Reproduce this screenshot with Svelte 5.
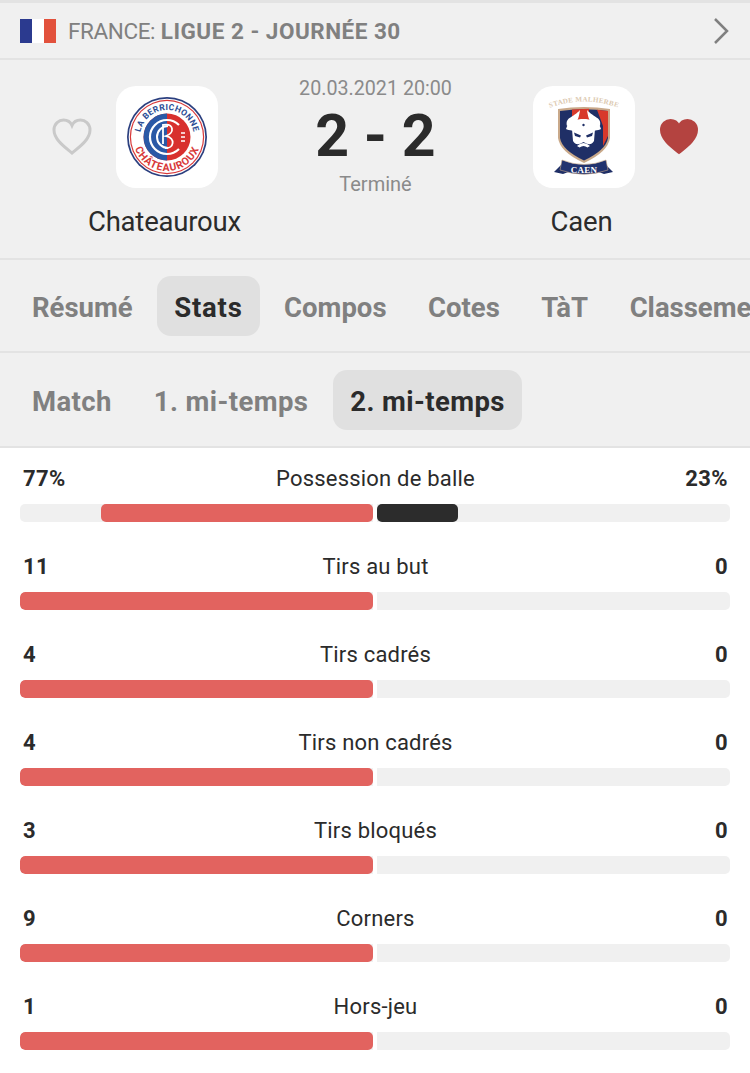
<script>
  const tabs = ['Résumé', 'Stats', 'Compos', 'Cotes', 'TàT', 'Classement'];
  const subtabs = ['Match', '1. mi-temps', '2. mi-temps'];
  const stats = [
    { name: 'Possession de balle', home: '77%', away: '23%', h: 77, a: 23 },
    { name: 'Tirs au but', home: '11', away: '0', h: 100, a: 0 },
    { name: 'Tirs cadrés', home: '4', away: '0', h: 100, a: 0 },
    { name: 'Tirs non cadrés', home: '4', away: '0', h: 100, a: 0 },
    { name: 'Tirs bloqués', home: '3', away: '0', h: 100, a: 0 },
    { name: 'Corners', home: '9', away: '0', h: 100, a: 0 },
    { name: 'Hors-jeu', home: '1', away: '0', h: 100, a: 0 }
  ];
  const heart = 'M20 35 C14 30 2 22 2 12 C2 5.500 7 2 11.500 2 C15 2 18.500 4 20 7.500 C21.500 4 25 2 28.500 2 C33 2 38 5.500 38 12 C38 22 26 30 20 35 Z';
</script>

<div class="page">
  <header class="league">
    <span class="flag"><i class="blue"></i><i class="white"></i><i class="red"></i></span>
    <span class="league-name"><span class="country">FRANCE:</span> <b>LIGUE 2 - JOURNÉE 30</b></span>
    <svg class="chevron" viewBox="0 0 16 28" width="16" height="28"><path d="M2 2 L14 14 L2 26" fill="none" stroke="#808080" stroke-width="2.500" /></svg>
  </header>

  <section class="match">
    <div class="team">
      <div class="team-row">
        <svg class="heart" viewBox="0 0 40 37" width="40" height="37"><path d={heart} fill="none" stroke="#c9c9c9" stroke-width="3" /></svg>
        <div class="crest">
          <svg viewBox="0 0 102 102" width="102" height="102">
            <defs>
              <path id="arcTop" d="M24 51 A27 27 0 0 1 78 51" />
              <path id="arcBottom" d="M17 51 A34 34 0 0 0 85 51" />
              <clipPath id="leftHalf"><rect x="0" y="0" width="51" height="102" /></clipPath>
            </defs>
            <circle cx="51" cy="51" r="40" fill="#2b3f7f" />
            <circle cx="51" cy="51" r="38.300" fill="#fff" />
            <circle cx="51" cy="51" r="37.200" fill="#d8393a" />
            <circle cx="51" cy="51" r="36" fill="#fff" />
            <circle cx="51" cy="51" r="23.500" fill="#d8302e" />
            <circle cx="51" cy="51" r="23.500" fill="#2a59a6" clip-path="url(#leftHalf)" />
            <path d="M63 39 A17 17 0 1 0 63 63" fill="none" stroke="#fff" stroke-width="2.200" />
            <path d="M52 40 A11 11 0 1 0 52 62" fill="none" stroke="#fff" stroke-width="2" />
            <path d="M47 38 V58 M47 39 C58 37 59 47 50 50 C60 52 58 63 49 62" fill="none" stroke="#fff" stroke-width="1.800" />
            <path d="M65 47 h4 M65 51 h4 M65 55 h4" stroke="#fff" stroke-width="1.300" />
            <text class="t-blue"><textPath href="#arcTop" startOffset="50%" text-anchor="middle">LA BERRICHONNE</textPath></text>
            <text class="t-red"><textPath href="#arcBottom" startOffset="50%" text-anchor="middle">CHÂTEAUROUX</textPath></text>
          </svg>
        </div>
        <span class="spacer"></span>
      </div>
      <div class="team-name">Chateauroux</div>
    </div>

    <div class="score">
      <div class="date">20.03.2021 20:00</div>
      <div class="result">2 - 2</div>
      <div class="status">Terminé</div>
    </div>

    <div class="team">
      <div class="team-row">
        <span class="spacer"></span>
        <div class="crest">
          <svg viewBox="0 0 102 102" width="102" height="102">
            <defs>
              <path id="arcCaen" d="M16 22 Q51 9 86 22" />
            </defs>
            <text class="t-tan"><textPath href="#arcCaen" startOffset="50%" text-anchor="middle">STADE MALHERBE</textPath></text>
            <path d="M25 23 Q51 19 77 23 L77 52 Q75 66 51 77 Q27 66 25 52 Z" fill="#c9a98a" />
            <path d="M27 25 Q51 21.500 75 25 L75 52 Q73 64 51 74.500 Q29 64 27 52 Z" fill="#1f2f66" />
            <path d="M39 23.500 L56 22.800 L56 40 L39 40 Z M64 23.800 L75 25 L75 50 L70 60 L70 40 Z" fill="#d8392b" />
            <path d="M34 40 C32 31 40 32 47 24 C46 31 45 34 42 38 Z" fill="#fff" />
            <path d="M67 40 C69 31 61 32 54 24 C55 31 56 34 59 38 Z" fill="#fff" />
            <path d="M33 43 C35 35 44 33 50.500 33 C57 33 66 35 68 43 C64 46 37 46 33 43 Z" fill="#fff" />
            <path d="M39 43 H62 L61 55 C58 60 54 58 50.500 56 C47 58 43 60 40 55 Z" fill="#fff" />
            <path d="M41 46.500 L48 49.500 L47 51.500 L42 50 Z M60 46.500 L53 49.500 L54 51.500 L59 50 Z" fill="#1f2f66" />
            <path d="M44 60 Q50.500 54 57 60 L54.500 61.500 Q50.500 58.500 46.500 61.500 Z" fill="#fff" />
            <circle cx="50.500" cy="39" r="1.200" fill="#1f2f66" />
            <path d="M29 78 L21 86 L30 88 L38 85 Z M72 78 L80 86 L71 88 L63 85 Z" fill="#1f2f66" />
            <path d="M29 74 Q51 83 73 74 L75 84 Q51 92.500 27 84 Z" fill="#22336f" stroke="#c9a98a" stroke-width=".6" />
            <text class="t-caen" x="51" y="87" text-anchor="middle">CAEN</text>
          </svg>
        </div>
        <svg class="heart" viewBox="0 0 40 37" width="40" height="37"><path d={heart} fill="#b44340" stroke="#b44340" stroke-width="2" /></svg>
      </div>
      <div class="team-name">Caen</div>
    </div>
  </section>

  <nav class="tabs">
    {#each tabs as tab}
      <span class="tab" class:active={tab === 'Stats'}>{tab}</span>
    {/each}
  </nav>

  <nav class="tabs sub">
    {#each subtabs as tab}
      <span class="tab" class:active={tab === '2. mi-temps'}>{tab}</span>
    {/each}
  </nav>

  <section class="stats">
    {#each stats as s}
      <div class="stat">
        <div class="labels">
          <span class="val">{s.home}</span>
          <span class="name">{s.name}</span>
          <span class="val">{s.away}</span>
        </div>
        <div class="bars">
          <div class="side home"><div class="fill" style="width:{s.h}%"></div></div>
          <div class="side away"><div class="fill" style="width:{s.a}%"></div></div>
        </div>
      </div>
    {/each}
  </section>
</div>

<style>
  :global(body) {
    margin: 0;
    background: #fff;
  }
  .page {
    width: 750px;
    height: 1073px;
    overflow: hidden;
    font-family: Roboto, "Liberation Sans", sans-serif;
    color: #2b2b2b;
    background: #fff;
  }
  .league {
    display: flex;
    align-items: center;
    height: 55px;
    padding: 0 21px 0 20px;
    background: #f0f0f0;
    border-top: 3px solid #e3e3e3;
    border-bottom: 2px solid #e3e3e3;
  }
  .flag {
    display: flex;
    width: 36px;
    height: 24px;
    margin-right: 12px;
  }
  .flag i {
    flex: 1;
  }
  .flag .blue { background: #2b3a8f; }
  .flag .white { background: #fff; }
  .flag .red { background: #e2513c; }
  .league-name {
    flex: 1;
    font-size: 22.500px;
    color: #808080;
    white-space: nowrap;
  }
  .country {
    letter-spacing: -0.4px;
  }
  .league-name b {
    font-weight: 700;
    letter-spacing: .5px;
  }
  .match {
    display: grid;
    grid-template-columns: 230px 187px 230px;
    height: 200px;
    padding-left: 52px;
    box-sizing: border-box;
    background: #f0f0f0;
    border-bottom: 2px solid #e3e3e3;
  }
  .team {
    display: flex;
    flex-direction: column;
    align-items: center;
    padding-top: 26px;
  }
  .team-row {
    display: flex;
    align-items: center;
    gap: 24px;
  }
  .team-name {
    margin-top: 17px;
    padding-right: 5px;
    font-size: 27.500px;
    line-height: 34px;
    letter-spacing: -0.2px;
  }
  .spacer {
    width: 40px;
    flex: none;
  }
  .heart {
    flex: none;
    margin-top: -2px;
    overflow: visible;
  }
  .crest {
    width: 102px;
    height: 102px;
    border-radius: 20px;
    background: #fff;
    overflow: hidden;
  }
  .crest svg {
    display: block;
  }
  .t-blue {
    font-size: 8.500px;
    font-weight: 700;
    fill: #2b4c94;
    letter-spacing: .3px;
  }
  .t-red {
    font-size: 10.500px;
    font-weight: 700;
    fill: #d8393a;
    letter-spacing: .8px;
  }
  .t-tan {
    font-family: "Liberation Serif", serif;
    font-size: 7px;
    font-weight: 700;
    fill: #dcc9b0;
    letter-spacing: .3px;
  }
  .t-caen {
    font-family: "Liberation Serif", serif;
    font-size: 9px;
    font-weight: 700;
    fill: #fff;
    letter-spacing: .3px;
  }
  .score {
    display: flex;
    flex-direction: column;
    align-items: center;
    text-align: center;
  }
  .date {
    margin-top: 17px;
    font-size: 19.700px;
    line-height: 24px;
    color: #8a8a8a;
    white-space: nowrap;
  }
  .result {
    font-size: 59px;
    font-weight: 700;
    line-height: 69px;
    white-space: nowrap;
    color: #2b2b2b;
  }
  .status {
    margin-top: 2px;
    font-size: 20px;
    line-height: 24px;
    color: #8a8a8a;
  }
  .tabs {
    display: flex;
    align-items: center;
    gap: 7.500px;
    height: 91px;
    padding: 0 15px;
    background: #f0f0f0;
    border-bottom: 2px solid #e3e3e3;
    overflow: hidden;
  }
  .tabs.sub {
    height: 93px;
    gap: 8px;
  }
  .tab {
    flex: none;
    height: 60px;
    padding: 0 17px;
    border-radius: 14px;
    font-size: 27.500px;
    font-weight: 700;
    line-height: 63px;
    color: #808080;
    white-space: nowrap;
  }
  .tab.active {
    background: #e0e0e0;
    color: #2b2b2b;
    letter-spacing: .8px;
  }
  .tabs.sub .tab {
    letter-spacing: .4px;
  }
  .stats {
    padding: 16px 20px 0;
  }
  .stat {
    height: 88px;
  }
  .labels {
    display: flex;
    justify-content: space-between;
    align-items: center;
    padding: 0 2px 0 3px;
    height: 28px;
    font-size: 22px;
    letter-spacing: .2px;
  }
  .labels .val {
    font-weight: 700;
    width: 60px;
    letter-spacing: .4px;
  }
  .labels .val:last-child {
    text-align: right;
  }
  .bars {
    display: flex;
    gap: 4px;
    margin-top: 12px;
  }
  .side {
    flex: 1;
    display: flex;
    height: 18px;
    background: #f0f0f0;
    overflow: hidden;
  }
  .side.home {
    justify-content: flex-end;
    border-radius: 5px 0 0 5px;
  }
  .side.away {
    border-radius: 0 5px 5px 0;
  }
  .fill {
    height: 100%;
    border-radius: 5px;
  }
  .home .fill {
    background: #e2635f;
  }
  .away .fill {
    background: #2c2c2c;
  }
</style>
